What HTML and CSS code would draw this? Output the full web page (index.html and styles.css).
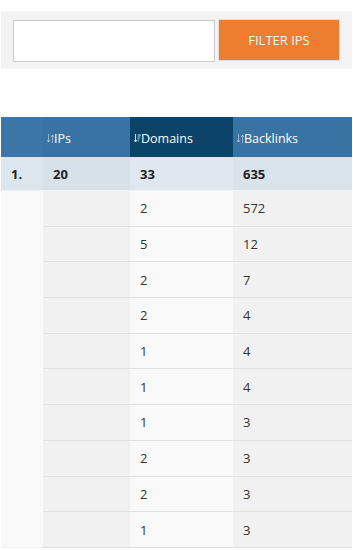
FILE: index.html
```html
<!DOCTYPE html>
<html>
<head>
<meta charset="utf-8">
<link rel="stylesheet" href="styles.css">
</head>
<body>
<div class="filter">
  <input class="filter-input" type="text">
  <button class="filter-btn">FILTER IPS</button>
</div>
<table class="ips">
  <thead>
    <tr>
      <th class="c1"></th>
      <th class="c2"><span class="th-in"><svg class="sort" viewBox="0 0 7 10"><path d="M1.5 0.5v8M0 6.5l1.5 2 1.5-2M5.5 9.5v-8M4 3.5l1.5-2 1.5 2" fill="none" stroke="currentColor" stroke-width="1"/></svg>IPs</span></th>
      <th class="c3 active"><span class="th-in"><svg class="sort on" viewBox="0 0 7 10"><path d="M1.5 0.5v8M0 6.5l1.5 2 1.5-2" fill="none" stroke="currentColor" stroke-width="1"/><path d="M3.5 1.5h3.5M3.5 3.5h2.7M3.5 5.5h2M3.5 7.5h1.2" fill="none" stroke="currentColor" stroke-width="1"/></svg>Domains</span></th>
      <th class="c4"><span class="th-in"><svg class="sort" viewBox="0 0 7 10"><path d="M1.5 0.5v8M0 6.5l1.5 2 1.5-2M5.5 9.5v-8M4 3.5l1.5-2 1.5 2" fill="none" stroke="currentColor" stroke-width="1"/></svg>Backlinks</span></th>
    </tr>
  </thead>
  <tbody>
    <tr class="main">
      <td class="c1">1.</td>
      <td class="c2">20</td>
      <td class="c3">33</td>
      <td class="c4">635</td>
    </tr>
    <tr class="sub first">
      <td class="c1 spacer" rowspan="10"></td>
      <td class="c2"></td><td class="c3">2</td><td class="c4">572</td>
    </tr>
    <tr class="sub"><td class="c2"></td><td class="c3">5</td><td class="c4">12</td></tr>
    <tr class="sub"><td class="c2"></td><td class="c3">2</td><td class="c4">7</td></tr>
    <tr class="sub"><td class="c2"></td><td class="c3">2</td><td class="c4">4</td></tr>
    <tr class="sub"><td class="c2"></td><td class="c3">1</td><td class="c4">4</td></tr>
    <tr class="sub"><td class="c2"></td><td class="c3">1</td><td class="c4">4</td></tr>
    <tr class="sub"><td class="c2"></td><td class="c3">1</td><td class="c4">3</td></tr>
    <tr class="sub"><td class="c2"></td><td class="c3">2</td><td class="c4">3</td></tr>
    <tr class="sub"><td class="c2"></td><td class="c3">2</td><td class="c4">3</td></tr>
    <tr class="sub"><td class="c2"></td><td class="c3">1</td><td class="c4">3</td></tr>
  </tbody>
</table>
</body>
</html>
```
FILE: styles.css
```css
html, body {
  margin: 0;
  padding: 0;
  background: #fff;
  font-family: "Open Sans", "Noto Sans", sans-serif;
  color: #333;
}
.filter {
  margin: 11px 1px 0 1px;
  width: 351px;
  height: 58px;
  box-sizing: border-box;
  background: #f3f3f3;
  display: flex;
  align-items: flex-start;
  padding: 8px 0 0 12px;
  gap: 3px;
}
.filter-input {
  margin: 1px 0 0 0;
  width: 202px;
  height: 42px;
  box-sizing: border-box;
  border: 1px solid #cccccc;
  background: #fff;
  padding: 0 8px;
  outline: none;
}
.filter-btn {
  margin: 0;
  width: 122px;
  height: 42px;
  box-sizing: border-box;
  border: 1px solid #dcdcdc;
  background: #ed7d2f;
  color: #fff6ef;
  font-family: "Open Sans", sans-serif;
  font-size: 13px;
  padding: 0;
}
.ips {
  margin: 48px 0 0 1px;
  width: 351px;
  border-collapse: collapse;
  table-layout: fixed;
  font-size: 13px;
}
.ips th, .ips td {
  padding: 0;
  text-align: left;
}
.ips .c1 { width: 42px; }
.ips .c2 { width: 87px; }
.ips .c3 { width: 103px; }
.ips .c4 { width: 119px; }
.ips thead th {
  height: 40px;
  background: #3973a3;
  color: #fff;
  font-weight: normal;
  font-size: 12.5px;
  vertical-align: middle;
}
.ips thead th.c1 { background: #3b76a6; }
.ips thead th.active { background: #0b4468; }
.th-in {
  display: flex;
  align-items: center;
  padding-left: 4px;
  padding-top: 2px;
}
.sort {
  width: 7px;
  height: 11px;
  margin-right: 0;
  color: rgba(255,255,255,0.45);
}
.sort.on { color: #c9d9e6; }
.ips tbody td {
  padding-left: 10px;
  vertical-align: middle;
}
.main td {
  height: 33px;
  font-weight: bold;
  background: #dce6ef;
  color: #222;
  border-bottom: 1px solid #eef3f7;
}
.main td.c2 { background: #d6e1ea; }
.main td.c3 { background: #dfe8f1; }
.main td.c4 { background: #d8e3eb; }
.sub td {
  height: 34.7px;
  border-bottom: 1px solid #e0e0e0;
  color: #333;
}
.sub td.c2 { background: #f1f1f1; }
.sub td.c3 { background: #f9f9f9; }
.sub td.c4 { background: #f1f1f1; }
.sub td.spacer {
  background: #f9f9f9;
  border-bottom: 1px solid #f0f0f0;
}
```
